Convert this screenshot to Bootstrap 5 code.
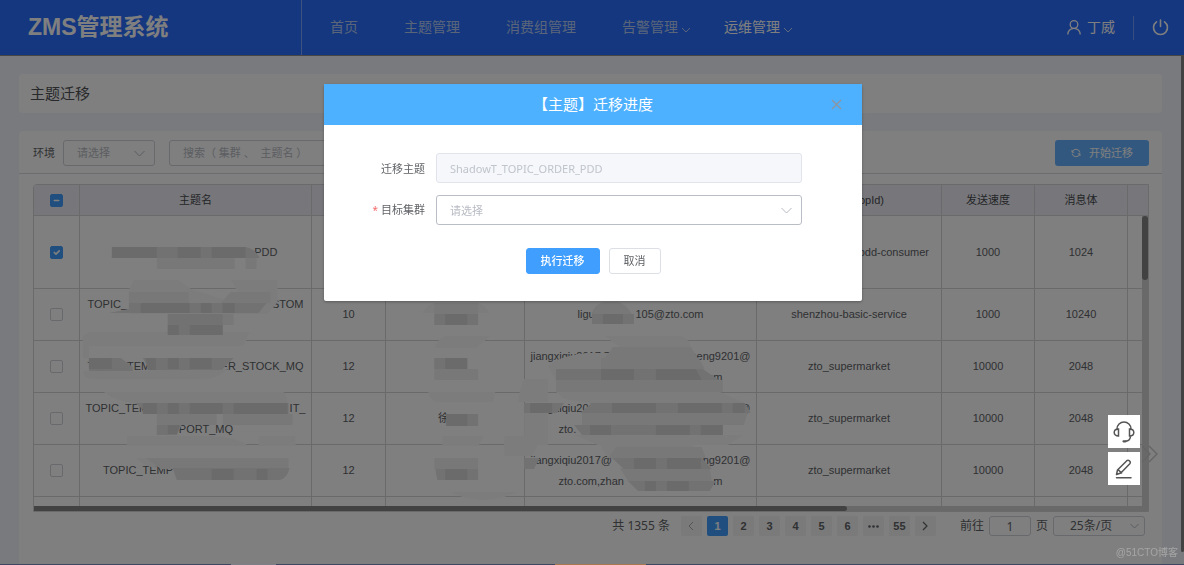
<!DOCTYPE html>
<html lang="zh-CN">
<head>
<meta charset="utf-8">
<meta name="viewport" content="width=device-width, initial-scale=1">
<title>ZMS管理系统</title>
<link href="https://cdn.jsdelivr.net/npm/bootstrap@5.3.0/dist/css/bootstrap.min.css" rel="stylesheet">
<style>
  :root { --ink: #606266; --line: #d5d5d5; --hint: #b8bbc4; --blue: #409eff; }
  html, body { height: 100%; }
  body { font-family: "Liberation Sans", "Noto Sans CJK SC", sans-serif; font-size: 11px; line-height: 21px; color: var(--ink); background: #f3f5fa; overflow: hidden; }
  svg.ico { fill: none; stroke: currentColor; display: block; }
  .topbar { background: #286eff; height: 56px; border-bottom: 1px solid #8c8c8c; color: #fff; }
  .brand-box { width: 302px; padding-left: 28px; border-right: 1px solid #7fa6ff; font-size: 23px; font-weight: 700; line-height: 55px; }
  .topbar .nav-link { color: #b5cbf5; font-size: 14px; line-height: 23px; padding: 16px 23px; display: flex; align-items: center; gap: 3px; }
  .topbar .nav-link.has-menu { padding-right: 10px; }
  .topbar .nav-link.active { color: #fff; }
  .main-nav { padding-left: 5px; }
  .user-box { font-size: 14px; gap: 6px; padding-right: 18px; }
  .power-box { height: 24px; padding: 0 15px 0 18px; display: flex; align-items: center; background: none; border: solid #6f9cff; border-width: 0 0 0 1px; color: #fff; }
  .page-main { padding: 18px 22px 0 19px; gap: 18px; height: calc(100% - 56px); }
  .panel { background: #fff; border-radius: 4px; }
  .page-title { font-size: 15px; line-height: 39px; padding-left: 11px; margin: 0; color: #505256; font-weight: 400; }
  .filter-bar { height: 43px; padding: 1px 13px 0 14px; border-bottom: 1px solid #d8dbe2; }
  .filter-bar label { margin-right: 8px; }
  .ctl { appearance: none; background: #fff; border: 1px solid #cfd2d9; border-radius: 3px; color: var(--hint); font-size: 11px; padding: 0 13px; height: 26px; width: 100%; font-family: inherit; }
  .ctl::placeholder { color: var(--hint); opacity: 1; }
  .with-arrow { position: relative; }
  .with-arrow svg { position: absolute; right: 10px; top: 50%; margin-top: -3px; color: #b4b8c0; pointer-events: none; }
  .env-box { width: 92px; margin-right: 14px; }
  .search-box { width: 220px; }
  .btn-start { background: #66b1ff; color: #fff; border: 0; border-radius: 3px; height: 26px; width: 94px; font-size: 11px; padding: 0; }
  .grid-wrap { margin: 10px 13px 0 14px; border: 1px solid var(--line); border-radius: 4px 0 0 0; position: relative; overflow: hidden; }
  .grid-wrap table { width: 100%; table-layout: fixed; border-collapse: separate; border-spacing: 0; }
  .grid-wrap th, .grid-wrap td { border-right: 1px solid var(--line); border-bottom: 1px solid var(--line); text-align: center; vertical-align: middle; padding: 0; font-weight: 400; white-space: nowrap; height: 52px; }
  .grid-wrap th { background: #eeeef7; height: 31px; color: #484a4e; }
  .grid-wrap tr.tall td { height: 73px; }
  .grid-wrap th:last-child, .grid-wrap td:last-child { border-right: 0; }
  .grid-view { height: 321px; overflow: hidden; }
  .grid-wrap .form-check-input { width: 13px; height: 13px; border-radius: 2px; border-color: #cfd2d8; display: block; margin: 0 auto; }
  .grid-wrap .form-check-input:checked, .grid-wrap .form-check-input:indeterminate { background-color: var(--blue); border-color: var(--blue); }
  .hbar { height: 5px; background: #d2d2d2; }
  .hbar span { display: block; width: 73%; height: 5px; background: #848484; border-radius: 0 3px 3px 0; }
  .vbar { position: absolute; right: 0; top: 31px; bottom: 5px; width: 6px; background: #d2d2d2; }
  .vbar span { display: block; height: 64px; background: #848484; border-radius: 3px; }
  .smudge { position: absolute; left: 0; top: 0; width: 100%; height: 326px; pointer-events: none; }
  .cut { display: flex; justify-content: space-between; margin: 0 auto; height: 21px; }
  .cut-end { justify-content: flex-end; }
  .c34 { width: 34px; } .c70 { width: 70px; } .c75 { width: 75px; } .c126 { width: 126px; } .c160 { width: 160px; }
  .c164 { width: 164px; } .c185 { width: 185px; } .c216 { width: 216px; } .c220 { width: 220px; }
  .pager { padding: 4px 17px 0 0; gap: 5px; box-sizing: content-box; height: 20px; font-size: 12px; line-height: 20px; }
  .pager, .modal-content, .filter-bar, .btn-start { font-family: "Noto Sans", "Noto Sans CJK SC", sans-serif; }
  .pager .pagination { gap: 5px; margin: 0 19px 0 6px; font-family: "Liberation Sans", sans-serif; }
  .pager .page-link { width: 21px; height: 20px; border: 0; background: #f4f4f5; color: var(--ink); font-weight: 700; font-size: 11px; line-height: 20px; padding: 0; display: flex; justify-content: center; align-items: center; }
  .pager .page-item .page-link { margin: 0; border-radius: 2px; }
  .pager .active .page-link { background: var(--blue); color: #fff; }
  .pager .ctl { height: 20px; font-size: 12px; color: var(--ink); line-height: 18px; }
  .go-box { width: 42px; text-align: center; }
  .size-box { width: 92px; }
  .size-box .ctl { padding: 0 16px; display: block; }
  .with-arrow.size-box svg { right: 6px; }
  .modal-backdrop { --bs-backdrop-opacity: .5; }
  .modal { padding-left: 2px; }
  .modal-dialog.migrate { max-width: 538px; margin: 84px auto 0; }
  .migrate .modal-content { border: 0; border-radius: 2px; box-shadow: 0 1px 3px rgba(0,0,0,.3); color: var(--ink); }
  .migrate .modal-header { background: #4db1ff; color: #fff; height: 41px; padding: 0; border: 0; border-radius: 0; justify-content: center; position: relative; }
  .migrate .modal-title { font-size: 15px; font-weight: 400; line-height: 41px; }
  .close-x { position: absolute; right: 20px; top: 15px; border: 0; background: none; padding: 0; color: #909399; }
  .migrate .modal-body { padding: 28px 60px 27px 0; }
  .migrate .field { display: grid; grid-template-columns: 101px 1fr; column-gap: 11px; align-items: center; margin-bottom: 12px; }
  .migrate .field label { text-align: right; }
  .migrate .field .ctl { height: 30px; }
  .migrate .field .ctl:disabled { background: #f5f7fa; border-color: #e1e4ec; color: #c0c4cc; }
  .migrate .field select.ctl { border-color: #b9bdc6; }
  .must { color: #f56c6c; font-size: 10px; }
  .acts { gap: 9px; padding: 11px 0 0 60px; }
  .acts .btn { height: 26px; font-size: 11px; line-height: 24px; padding: 0 13px; border-radius: 3px; }
  .btn-run { background: var(--blue); color: #fff; border-color: var(--blue); font-weight: 500; width: 74px; }
  .btn-drop { background: #fff; color: var(--ink); border-color: #dcdfe6; width: 52px; }
  .over { z-index: 1060; }
  .tools { position: fixed; right: 44px; bottom: 80px; gap: 4px; }
  .tools button { width: 32px; height: 33px; background: #fff; border: 0; padding: 0; color: #555; display: flex; align-items: center; justify-content: center; }
  .fold { position: fixed; right: 26px; bottom: 101px; color: #646464; z-index: 1058; }
  .stamp { position: fixed; right: 6px; bottom: 3px; font-size: 10px; line-height: 18px; color: #a6a6a6; }
  .page-scroll { position: fixed; right: 0; top: 56px; bottom: 13px; width: 3px; background: #424242; border-radius: 0 0 2px 2px; }
  .taskline { position: fixed; left: 0; right: 0; bottom: 0; height: 1px; background: linear-gradient(90deg, #3d4760 19.5%, #7b7f88 19.5% 23.3%, #3d4760 23.3% 46.9%, #a87850 46.9% 54.6%, #3d4760 54.6%); }
</style>
</head>
<body>
<header class="topbar d-flex align-items-center">
  <div class="brand-box flex-shrink-0">ZMS管理系统</div>
  <nav class="main-nav flex-grow-1">
    <ul class="nav flex-nowrap">
      <li class="nav-item"><a class="nav-link" href="#">首页</a></li>
      <li class="nav-item"><a class="nav-link" href="#">主题管理</a></li>
      <li class="nav-item"><a class="nav-link" href="#">消费组管理</a></li>
      <li class="nav-item"><a class="nav-link has-menu" href="#">告警管理 <svg class="ico mt-1" width="10" height="6" viewBox="0 0 10 6"><path d="M1 1l4 4 4-4"/></svg></a></li>
      <li class="nav-item"><a class="nav-link has-menu active" href="#">运维管理 <svg class="ico mt-1" width="10" height="6" viewBox="0 0 10 6"><path d="M1 1l4 4 4-4" opacity=".7"/></svg></a></li>
    </ul>
  </nav>
  <div class="user-box d-flex align-items-center flex-shrink-0">
    <svg class="ico" width="14" height="15" viewBox="0 0 14 15" stroke-width="1.3"><circle cx="7" cy="4.5" r="3.8"/><path d="M.8 14.6C.8 10.800 3.500 8.300 7 8.300s6.200 2.500 6.200 6.300"/></svg>
    <span>丁威</span>
  </div>
  <button class="power-box" aria-label="退出"><svg class="ico" width="17" height="17" viewBox="0 0 17 17" stroke-width="1.600" stroke-linecap="round"><path d="M8.500 1v6.500M4.500 2.800a7 7 0 1 0 8 0"/></svg></button>
</header>

<main class="page-main d-flex flex-column">
  <section class="panel"><h1 class="page-title">主题迁移</h1></section>
  <section class="panel flex-grow-1">
    <div class="filter-bar d-flex align-items-center">
      <label for="env">环境</label>
      <div class="env-box with-arrow">
        <select id="env" class="ctl"><option>请选择</option></select>
        <svg class="ico" width="11" height="7" viewBox="0 0 11 7"><path d="M.5 1l5 5 5-5"/></svg>
      </div>
      <div class="search-box"><input class="ctl" type="text" aria-label="搜索" placeholder="搜索（ 集群 、  主题名 ）"></div>
      <button class="btn-start ms-auto d-flex align-items-center justify-content-center gap-2">
        <svg class="ico" width="10" height="10" viewBox="0 0 10 10"><path d="M1 2v2.200h2.200M1.200 4A4 4 0 0 1 8.900 4.500M9 8V5.800H6.800M8.800 6A4 4 0 0 1 1.100 5.500"/></svg>开始迁移</button>
    </div>

    <div class="grid-wrap">
      <div class="grid-view">
        <table>
          <colgroup><col style="width:46px"><col style="width:232px"><col style="width:74px"><col style="width:139px"><col style="width:232px"><col style="width:185px"><col style="width:93px"><col style="width:93px"><col style="width:22px"></colgroup>
          <thead>
            <tr><th><input id="all" class="form-check-input" type="checkbox" aria-label="全选"></th><th>主题名</th><th></th><th></th><th></th><th><span class="cut cut-end c70">(AppId)</span></th><th>发送速度</th><th>消息体</th><th></th></tr>
          </thead>
          <tbody>
            <tr class="tall"><td><input class="form-check-input" type="checkbox" checked aria-label="选择"></td><td><span class="cut cut-end c164">PDD</span></td><td></td><td></td><td></td><td><span class="cut cut-end c160">pdd-consumer</span></td><td>1000</td><td>1024</td><td></td></tr>
            <tr><td><input class="form-check-input" type="checkbox" aria-label="选择"></td><td><span class="cut c216">TOPIC_<span>CUSTOM</span></span><span class="cut c75"></span></td><td>10</td><td></td><td><span class="cut c126">ligu<span>105@zto.com</span></span></td><td>shenzhou-basic-service</td><td>1000</td><td>10240</td><td></td></tr>
            <tr><td><input class="form-check-input" type="checkbox" aria-label="选择"></td><td><span class="cut c216">TOPIC_TEM<span>ER_STOCK_MQ</span></span></td><td>12</td><td></td><td><span class="cut c220">jiangxiqiu2017@<span>heng9201@</span></span><span class="cut cut-end c164">om</span></td><td>zto_supermarket</td><td>10000</td><td>2048</td><td></td></tr>
            <tr><td><input class="form-check-input" type="checkbox" aria-label="选择"></td><td><span class="cut c220">TOPIC_TEM<span>IT_</span></span><span class="cut cut-end c75">PORT_MQ</span></td><td>12</td><td><span class="cut c34">徐</span></td><td><span class="cut c220">jiangxiqiu2017@<span>@</span></span><span class="cut c164">zto.</span></td><td>zto_supermarket</td><td>10000</td><td>2048</td><td></td></tr>
            <tr><td><input class="form-check-input" type="checkbox" aria-label="选择"></td><td><span class="cut c185">TOPIC_TEMP</span></td><td>12</td><td></td><td><span class="cut c220">jiangxiqiu2017@<span>ng9201@</span></span><span class="cut c164">zto.com,zhan<span>m</span></span></td><td>zto_supermarket</td><td>10000</td><td>2048</td><td></td></tr>
            <tr><td></td><td></td><td></td><td></td><td></td><td></td><td></td><td></td><td></td></tr>
          </tbody>
        </table>
      </div>
      <!-- blurred-out private values -->
      <svg class="smudge" viewBox="33 184 1116 326" preserveAspectRatio="none" aria-hidden="true">
        <!-- faint brush strokes -->
        <g fill="#f9f9f9">
          <path d="M133 279h45l12 9 38 12 10-8-8-13h47v22l-10 12H128v-24zM88 331h161l-6 14H82v-10zM82 345h6v12h-6zM82 370h65v-2h80q-10 10-24 10H92q-10 0-10-8zM103 391h180q4 4 4 11H133q-20-2-30-11zM126 435h84q24 0 38 10H126zM258 435h37v10h-37zM135 457h20v10q-12-2-20-10z"/>
          <path d="M422 312q6-10 12-10h44q8 2 11 10zM445 335h45l-14 12h-42q4-10 11-12zM428 391h67l-2 10h-55q-8 0-10-10zM442 435h42l-6 10h-36zM504 435h38l-10 20h-28zM450 491h66q-12 7-36 8-20-2-30-8zM524 378h24v23h-30q2-16 6-23zM524 412h24v32h-24z"/>
          <path d="M605 335h77q8 4 9 11h-72zM548 365q10-10 40-13h36v28h-68zM556 391h164l25 11H590l-26-4zM574 434h170l-16 10h-130zM600 444h94v13h-86z"/>
        </g>
        <!-- light mosaic cells -->
        <path fill="#f0f0f0" d="M156 257h78v11h-78zM245 257h11v11h-11zM128 291h60v11h-60zM230 291h40v11h-50zM167 313h66v11h-66zM156 413h60v11h-60zM222 413h70v11h-70zM145 457h143v11H160zM434 302h44v11h-44zM434 368h44v11h-44zM434 457h44v11h-44zM613 346h78l7 11h-93zM601 357h98l6 11H601zM556 379h167v12H556zM582 412h166l-4 12H582zM590 402h10v10h-10zM616 446h86l4 11h-98zM620 467h90l2 13h-84zM592 313q2-10 12-12h14q8 2 14 12z"/>
        <!-- mid mosaic cells -->
        <path fill="#e4e4e4" d="M111 246h134q10 2 14 11H111zM128 302h138l-8 10H108l20-4zM167 313h55v21h-55zM88 357h32l12 9v4H88zM142 357h91l-12 12h-72zM134 402h154v11H148zM156 424h25l-5 10h-20zM172 467h117q-2 10-10 12H176zM434 313h44v11h-44zM434 357h33v11h-33zM446 413h32v12h-32zM435 468h43v11h-41zM592 313h42v10h-42zM556 368h147l16 11H556zM524 402h40l-7 10h-33zM592 402h153l6 10H580zM574 424h149v10H582zM524 457h15l-5 11h-10zM612 457h90l10 11h-88zM628 480h88l-6 10h-72z"/>
        <!-- dark mosaic cells -->
        <path fill="#d6d6d6" d="M111 246h45v11h-45zM177 246h23v11h-23zM211 246h34v11h-34zM140 302h49v10h-49zM200 302h11v10h-11zM222 302h12v10h-12zM167 324h11v10h-11zM189 324h33v10h-33zM88 357h23v11H88zM145 357h10v12h-8zM167 357h11v11h-11zM189 357h22v11h-22zM142 402h14v11h-14zM167 402h11v11h-11zM189 402h33v11h-33zM233 402h54v11h-54zM167 424h12l-3 9h-9zM211 468h22v11h-22zM256 468h11v11h-11zM445 313h22v11h-22zM445 357h22v11h-22zM446 413h21v12h-21zM445 468h22v11h-22zM603 313h20v10h-20zM601 368h33v11h-33zM656 368h40l6 11h-46zM530 402h22v10h-22zM612 402h44v10h-44zM678 402h44v10h-44zM733 402h12v10h-12zM590 424h21v10h-21zM656 424h34v10h-34zM701 424h22v10h-22zM634 457h22v11h-22zM667 457h34v11h-34zM645 480h11v10h-11zM667 480h22v10h-22z"/>
      </svg>
      <div class="vbar"><span></span></div>
      <div class="hbar"><span></span></div>
    </div>

    <div class="pager d-flex justify-content-end align-items-stretch">
      <span>共 1355 条</span>
      <ul class="pagination">
        <li class="page-item disabled"><a class="page-link" href="#" aria-label="上一页"><svg class="ico" width="6" height="10" viewBox="0 0 6 10" opacity=".5"><path d="M5 1L1 5l4 4"/></svg></a></li>
        <li class="page-item active"><a class="page-link" href="#">1</a></li>
        <li class="page-item"><a class="page-link" href="#">2</a></li>
        <li class="page-item"><a class="page-link" href="#">3</a></li>
        <li class="page-item"><a class="page-link" href="#">4</a></li>
        <li class="page-item"><a class="page-link" href="#">5</a></li>
        <li class="page-item"><a class="page-link" href="#">6</a></li>
        <li class="page-item"><a class="page-link" href="#" aria-label="更多"><svg width="11" height="3" viewBox="0 0 11 3" fill="currentColor"><circle cx="1.500" cy="1.500" r="1.300"/><circle cx="5.500" cy="1.500" r="1.300"/><circle cx="9.500" cy="1.500" r="1.300"/></svg></a></li>
        <li class="page-item"><a class="page-link" href="#">55</a></li>
        <li class="page-item"><a class="page-link" href="#" aria-label="下一页"><svg class="ico" width="6" height="10" viewBox="0 0 6 10" stroke-width="1.200"><path d="M1 1l4 4-4 4"/></svg></a></li>
      </ul>
      <label for="go">前往</label>
      <div class="go-box"><input id="go" class="ctl text-center" type="text" value="1"></div>
      <span>页</span>
      <div class="size-box with-arrow">
        <select class="ctl" aria-label="每页条数"><option>25条/页</option></select>
        <svg class="ico" width="9" height="6" viewBox="0 0 9 6"><path d="M.5 1l4 4 4-4"/></svg>
      </div>
    </div>
  </section>
</main>

<div class="modal-backdrop show"></div>

<div class="modal d-block" role="dialog" aria-labelledby="dlg-title">
  <div class="modal-dialog migrate">
    <div class="modal-content">
      <div class="modal-header">
        <h2 class="modal-title" id="dlg-title">【主题】迁移进度</h2>
        <button class="close-x" aria-label="关闭"><svg class="ico" width="11" height="11" viewBox="0 0 11 11" stroke-width="1.200"><path d="M1 1l9 9M10 1l-9 9"/></svg></button>
      </div>
      <form class="modal-body">
        <div class="field"><label for="topic">迁移主题</label><input id="topic" class="ctl" type="text" value="ShadowT_TOPIC_ORDER_PDD" disabled></div>
        <div class="field"><label for="target"><span class="must">*</span> 目标集群</label>
          <div class="with-arrow"><select id="target" class="ctl"><option>请选择</option></select>
            <svg class="ico" width="11" height="7" viewBox="0 0 11 7"><path d="M.5 1l5 5 5-5"/></svg></div></div>
        <div class="acts d-flex justify-content-center">
          <button type="button" class="btn btn-run">执行迁移</button>
          <button type="button" class="btn btn-drop">取消</button>
        </div>
      </form>
    </div>
  </div>
</div>

<svg class="ico fold" width="17" height="20" viewBox="0 0 17 20" stroke-width="1.300"><path d="M1 2l8 8-8 8M8 2l8 8-8 8"/></svg>
<div class="tools over d-flex flex-column">
  <button aria-label="客服"><svg class="ico" width="22" height="22" viewBox="0 0 22 22" stroke-width="1.500" stroke-linecap="round"><path d="M4 8.500V8a7 7 0 0 1 14 0v.5M5.500 8v7C2.800 15 1.200 13.500 1.200 11.500S2.800 8 5.500 8zM16.500 8v7c2.700 0 4.300-1.500 4.300-3.500S19.200 8 16.500 8zM17.500 15c0 3-2 5-5 5.200"/><path d="M10.500 20.300h2" stroke-width="2.200"/></svg></button>
  <button aria-label="反馈"><svg class="ico" width="18" height="20" viewBox="0 0 18 20" stroke-width="1.500" stroke-linejoin="round" stroke-linecap="round"><path d="M1.500 15.500l1-4.500L11.800 1.700q1.200-1 2.400 0l.6.6q1 1.200 0 2.400L5.800 14zM3 10.500l3.500 3.500M1.500 18.800h14.500"/></svg></button>
</div>
<div class="page-scroll over"></div>
<div class="stamp over">@51CTO博客</div>
<div class="taskline over"></div>

<script src="https://cdn.jsdelivr.net/npm/bootstrap@5.3.0/dist/js/bootstrap.bundle.min.js"></script>
<script>document.getElementById('all').indeterminate = true;</script>
</body>
</html>
